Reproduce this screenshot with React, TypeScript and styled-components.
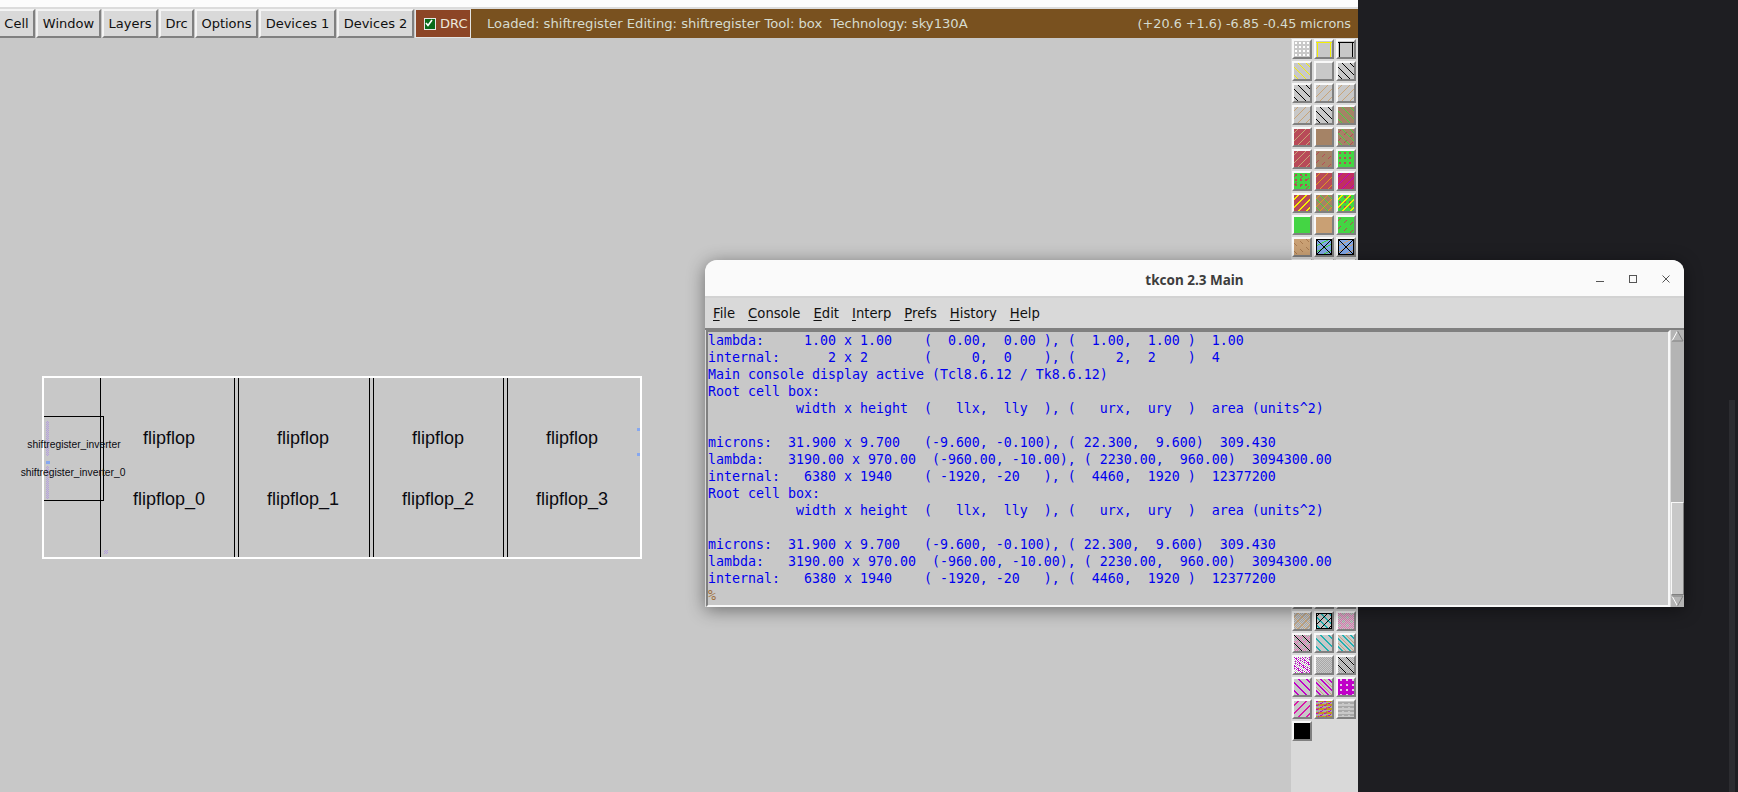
import React from 'react';
import styled, { createGlobalStyle } from 'styled-components';

const GlobalStyle = createGlobalStyle`
  html, body {
    margin: 0;
    padding: 0;
    overflow: hidden;
    background: #1e1e22;
  }
`;

const Screen = styled.div`
  display: flex;
  width: 1738px;
  height: 792px;
  overflow: hidden;
  position: relative;
`;
const Editor = styled.div`
  display: flex;
  flex-direction: column;
  width: 1358px;
  height: 100%;
  border-top: 7px solid #fcfcfc;
  box-sizing: border-box;
  background: #c8c8c8;
`;
const TopEdge = styled.div`
  height: 2px;
  background: #dcdcdc;
`;
const Toolbar = styled.div`
  display: flex;
  height: 29px;
  font-family: 'DejaVu Sans', sans-serif;
  font-size: 13px;
`;
const ToolButton = styled.div<{ $w: number; $first?: boolean }>`
  box-sizing: border-box;
  width: ${(p) => p.$w}px;
  margin-right: 1px;
  display: flex;
  align-items: center;
  justify-content: center;
  background: #d9d9d9;
  color: #101010;
  border: 2px solid;
  border-color: #f4f4f4 #808080 #808080 #f4f4f4;
  ${(p) => p.$first && 'border-left: 0;'}
`;
const DrcButton = styled.div`
  box-sizing: border-box;
  width: 56px;
  display: flex;
  align-items: center;
  gap: 4px;
  padding-left: 8px;
  background: #8c4526;
  color: #ece8dc;
  border: 1px solid #e4e4e4;
`;
const CheckBox = styled.span`
  display: flex;
  width: 10px;
  height: 10px;
  background: #0a6a1a;
  border: 1px solid #e8e8e8;
`;
const StatusBar = styled.div`
  flex: 1;
  display: flex;
  align-items: center;
  justify-content: space-between;
  padding: 0 7px 0 16px;
  background: #79511f;
  color: #d6dcd0;
  white-space: pre;
`;
const StatusLeft = styled.span`
  font-size: 13.15px;
`;
const StatusRight = styled.span`
  font-size: 12.8px;
`;
const Workspace = styled.div`
  flex: 1;
  display: flex;
  min-height: 0;
`;
const Canvas = styled.div`
  flex: 1;
  position: relative;
  background: #c8c8c8;
`;
const CellBox = styled.div`
  position: absolute;
  left: 42px;
  top: 338px;
  width: 600px;
  height: 183px;
  box-sizing: border-box;
  border: 2px solid #ffffff;
`;
const Rail = styled.div<{ $x: number }>`
  position: absolute;
  left: ${(p) => p.$x}px;
  top: 0;
  bottom: 0;
  width: 1px;
  background: #000000;
`;
const InverterBox = styled.div`
  position: absolute;
  left: 0;
  top: 38px;
  width: 60px;
  height: 85px;
  box-sizing: border-box;
  border: 1px solid #000000;
  border-left: 0;
`;
const Label = styled.div<{ $x: number; $y: number; $small?: boolean }>`
  position: absolute;
  left: ${(p) => p.$x}px;
  top: ${(p) => p.$y}px;
  transform: translate(-50%, -50%);
  font-family: 'Liberation Sans', Arial, sans-serif;
  font-size: ${(p) => (p.$small ? '10.3px' : '18px')};
  color: #0a0a10;
  white-space: nowrap;
`;
const Mark = styled.div<{ $x: number; $y: number; $w: number; $h: number; $dotted?: boolean }>`
  position: absolute;
  left: ${(p) => p.$x}px;
  top: ${(p) => p.$y}px;
  width: ${(p) => p.$w}px;
  height: ${(p) => p.$h}px;
  background: ${(p) =>
    p.$dotted
      ? 'repeating-conic-gradient(#b49ee0 0 25%, #c8c8c8 0 50%) 0 0 / 2px 2px'
      : '#86a8f0'};
`;
const Palette = styled.div`
  width: 67px;
  box-sizing: border-box;
  padding: 1px 0 0 1px;
  background: #d9d9d9;
  display: grid;
  grid-template-columns: repeat(3, 20px);
  grid-auto-rows: 20px;
  gap: 2px;
  overflow: hidden;
  align-content: start;
`;
const SwatchFrame = styled.div`
  box-sizing: border-box;
  width: 20px;
  height: 20px;
  border: 2px solid;
  border-color: #f8f8f8 #808080 #808080 #f8f8f8;
  svg {
    display: block;
  }
`;
const Desktop = styled.div`
  flex: 1;
  display: flex;
  justify-content: flex-end;
  padding-right: 3px;
  background: #1e1e22;
`;
const DesktopScroll = styled.div`
  width: 6px;
  margin-top: 400px;
  background: #2c2c30;
`;

const Terminal = styled.div`
  position: absolute;
  left: 705px;
  top: 260px;
  width: 979px;
  height: 347px;
  display: flex;
  flex-direction: column;
  border-radius: 12px 12px 0 0;
  overflow: hidden;
  background: #d9d9d9;
  box-shadow: 0 3px 18px rgba(0, 0, 0, 0.45);
`;
const TitleBar = styled.div`
  height: 36px;
  flex: none;
  display: grid;
  grid-template-columns: 1fr auto 1fr;
  align-items: center;
  background: #fafafa;
  border-bottom: 2px solid #d2d2d2;
`;
const Title = styled.div`
  grid-column: 2;
  padding-top: 3px;
  font-family: 'Noto Sans', sans-serif;
  font-weight: 700;
  font-size: 13.5px;
  color: #3d3d3d;
`;
const WindowControls = styled.div`
  grid-column: 3;
  justify-self: end;
  display: flex;
  align-items: center;
  gap: 23px;
  padding: 2px 13px 0 0;
  svg {
    display: block;
  }
`;
const MenuBar = styled.div`
  height: 32px;
  flex: none;
  display: flex;
  align-items: center;
  gap: 13px;
  padding-left: 8px;
  background: #d9d9d9;
  font-family: 'DejaVu Sans', sans-serif;
  font-size: 13.2px;
  color: #101010;
  border-bottom: 2px solid #808080;
  box-sizing: border-box;
`;
const MenuKey = styled.span`
  text-decoration: underline;
  text-underline-offset: 2px;
`;
const ConsoleRow = styled.div`
  flex: 1;
  min-height: 0;
  display: flex;
  padding-left: 1px;
`;
const ConsoleText = styled.pre`
  flex: 1;
  margin: 0;
  box-sizing: border-box;
  padding: 0;
  background: #c8c8c8;
  border: 2px solid;
  border-color: #808080 #f8f8f8 #f8f8f8 #808080;
  color: #0000ee;
  font-family: 'DejaVu Sans Mono', monospace;
  font-size: 13.29px;
  line-height: 17px;
  overflow: hidden;
`;
const Prompt = styled.span`
  color: #a0703c;
`;
const ScrollBar = styled.div`
  width: 14px;
  flex: none;
  display: flex;
  flex-direction: column;
  background: #b4b4b4;
  border-left: 1px solid #d9d9d9;
  box-sizing: border-box;
  svg {
    display: block;
  }
`;
const Trough = styled.div`
  flex: 1;
  display: flex;
  flex-direction: column;
  justify-content: flex-end;
`;
const Thumb = styled.div`
  height: 93px;
  box-sizing: border-box;
  background: #c8c8c8;
  border: 1px solid;
  border-color: #f8f8f8 #808080 #808080 #f8f8f8;
`;

const GRAY = '#c8c8c8';
const RED = '#b84a58';
const BROWN = '#a58366';
const GREEN = '#44d544';
const TAN = '#c9a074';
const BLUE = '#82a8e8';
const ROSE = '#c03060';
const TEAL = '#20b0b0';
const PINK = '#e070b0';
const MAGENTA = '#c000c8';
const GOLD = '#c09a20';
const DIM = '#a8a8a8';
const ORANGE = '#e09a20';
const YELLOW = '#f4f000';
const SAND = '#c8a478';

type Test = (x: number, y: number) => boolean;

const kinds: Record<string, Test> = {
  up: (x, y) => (x + y) % 8 === 3,
  down: (x, y) => (x - y + 16) % 8 === 4,
  upAlt: (x, y) => (x + y) % 8 === 7,
  downAlt: (x, y) => (x - y + 16) % 8 === 0,
  upThick: (x, y) => (x + y) % 8 === 3 || (x + y) % 8 === 4,
  downThick: (x, y) => (x - y + 16) % 8 === 4 || (x - y + 16) % 8 === 5,
  upDash: (x, y) => (x + y) % 8 === 3 && x % 6 < 3,
  downDash: (x, y) => (x - y + 16) % 8 === 4 && x % 6 < 3,
  dots: (x, y) => x % 4 > 0 && x % 4 < 3 && y % 4 > 0 && y % 4 < 3,
  blocks: (x, y) => x % 5 > 0 && x % 5 < 3 && y % 5 > 0 && y % 5 < 3,
  specks: (x, y) => (x + 2 * y) % 8 < 1 || ((x + 2 * y) % 8 === 1 && y % 2 === 0),
  check: (x, y) => (x + y) % 2 === 0,
  box: (x, y) => y >= 1 && (x === 1 || y === 1 || x === 14),
  frame: (x, y) => x === 0 || y === 0 || x === 15 || y === 15,
  cross: (x, y) => x === y || x + y === 15,
  band: (x, y) => (x + 2 * y) % 12 < 2,
  brick: (x, y) => y % 4 === 1 || (y % 4 === 2 && x % 6 < 4),
  pink: (x, y) => (x + y) % 2 === 0 && ((x + y) % 8 < 3 || (x - y + 16) % 8 < 3),
  bits: (x, y) => (x * 3 + y * 5) % 11 < 2 || (x - y + 16) % 8 === 0,
  holes: (x, y) => !((x % 6 === 2 || x % 6 === 3) && y % 5 < 2),
};

type Layer = [string, string];

// one palette tile: a background and a stack of 16x16 bitmap layers
const Swatch = ({ bg, layers = [] }: { bg: string; layers?: Layer[] }) => (
  <SwatchFrame>
    <svg width="16" height="16" viewBox="0 0 16 16" shapeRendering="crispEdges">
      <rect width="16" height="16" fill={bg} />
      {layers.map(([kind, color], i) => {
        let d = '';
        for (let y = 0; y < 16; y++) {
          for (let x = 0; x < 16; x++) {
            if (kinds[kind](x, y)) d += `M${x} ${y}h1v1h-1z`;
          }
        }
        return <path key={i} d={d} fill={color} />;
      })}
    </svg>
  </SwatchFrame>
);

const plain = { bg: GRAY };

const topTiles: { bg: string; layers?: Layer[] }[] = [
  { bg: GRAY, layers: [['dots', '#ffffff']] },
  { bg: GRAY, layers: [['box', YELLOW]] },
  { bg: GRAY, layers: [['box', '#000000']] },

  { bg: GRAY, layers: [['down', YELLOW]] },
  plain,
  { bg: GRAY, layers: [['down', '#000000']] },

  { bg: GRAY, layers: [['down', '#000000']] },
  { bg: GRAY, layers: [['up', SAND]] },
  { bg: GRAY, layers: [['up', SAND]] },

  { bg: GRAY, layers: [['up', SAND]] },
  { bg: GRAY, layers: [['down', '#000000']] },
  { bg: BROWN, layers: [['down', GREEN]] },

  { bg: RED, layers: [['up', SAND]] },
  { bg: BROWN },
  { bg: BROWN, layers: [['down', GREEN], ['upDash', RED]] },

  { bg: RED, layers: [['up', SAND]] },
  { bg: BROWN, layers: [['upDash', RED]] },
  { bg: GREEN, layers: [['blocks', RED]] },

  { bg: GREEN, layers: [['blocks', RED], ['upDash', RED]] },
  { bg: RED, layers: [['up', ORANGE]] },
  { bg: ROSE, layers: [['up', MAGENTA]] },

  { bg: RED, layers: [['upThick', YELLOW]] },
  { bg: BROWN, layers: [['down', GREEN], ['up', ORANGE]] },
  { bg: GREEN, layers: [['blocks', RED], ['upThick', YELLOW]] },

  { bg: GREEN },
  { bg: TAN },
  { bg: GREEN, layers: [['upDash', RED]] },

  { bg: TAN, layers: [['downDash', '#a87a50']] },
  { bg: BLUE, layers: [['band', GREEN], ['cross', '#000000'], ['frame', '#000000']] },
  { bg: BLUE, layers: [['band', TAN], ['cross', '#000000'], ['frame', '#000000']] },
];

const bottomTiles: { bg: string; layers?: Layer[] }[] = [
  { bg: GRAY, layers: [['check', DIM], ['down', SAND], ['up', SAND]] },
  { bg: GRAY, layers: [['downThick', TEAL], ['up', '#000000'], ['frame', '#000000']] },
  { bg: GRAY, layers: [['check', DIM], ['pink', PINK]] },

  { bg: GRAY, layers: [['check', DIM], ['pink', PINK], ['downAlt', '#000000']] },
  { bg: GRAY, layers: [['downThick', TEAL]] },
  { bg: GRAY, layers: [['downThick', TEAL], ['downAlt', SAND]] },

  { bg: '#ffffff', layers: [['check', '#c0c0c0'], ['bits', MAGENTA]] },
  { bg: GRAY, layers: [['check', DIM]] },
  { bg: GRAY, layers: [['check', DIM], ['downAlt', '#000000']] },

  { bg: GRAY, layers: [['downThick', MAGENTA]] },
  { bg: GRAY, layers: [['downThick', MAGENTA], ['downAlt', SAND]] },
  { bg: '#e4c8e4', layers: [['holes', MAGENTA]] },

  { bg: GRAY, layers: [['upThick', '#d818a8']] },
  { bg: GOLD, layers: [['brick', DIM], ['specks', MAGENTA]] },
  { bg: GRAY, layers: [['brick', DIM]] },

  { bg: '#000000' },
];

const hiddenTiles = Array.from({ length: 48 }, () => plain);

const menuItems = [
  ['F', 'ile'],
  ['C', 'onsole'],
  ['E', 'dit'],
  ['I', 'nterp'],
  ['P', 'refs'],
  ['H', 'istory'],
  ['H', 'elp'],
];

const cells = [
  { x: 125, name: 'flipflop_0' },
  { x: 259, name: 'flipflop_1' },
  { x: 394, name: 'flipflop_2' },
  { x: 528, name: 'flipflop_3' },
];

const consoleLog = `lambda:     1.00 x 1.00    (  0.00,  0.00 ), (  1.00,  1.00 )  1.00
internal:      2 x 2       (     0,  0    ), (     2,  2    )  4
Main console display active (Tcl8.6.12 / Tk8.6.12)
Root cell box:
           width x height  (   llx,  lly  ), (   urx,  ury  )  area (units^2)

microns:  31.900 x 9.700   (-9.600, -0.100), ( 22.300,  9.600)  309.430
lambda:   3190.00 x 970.00  (-960.00, -10.00), ( 2230.00,  960.00)  3094300.00
internal:   6380 x 1940    ( -1920, -20   ), (  4460,  1920 )  12377200
Root cell box:
           width x height  (   llx,  lly  ), (   urx,  ury  )  area (units^2)

microns:  31.900 x 9.700   (-9.600, -0.100), ( 22.300,  9.600)  309.430
lambda:   3190.00 x 970.00  (-960.00, -10.00), ( 2230.00,  960.00)  3094300.00
internal:   6380 x 1940    ( -1920, -20   ), (  4460,  1920 )  12377200
`;

const App = () => (
  <Screen>
    <GlobalStyle />
    <Editor>
      <TopEdge />
      <Toolbar>
        <ToolButton $w={35} $first>Cell</ToolButton>
        <ToolButton $w={65}>Window</ToolButton>
        <ToolButton $w={56}>Layers</ToolButton>
        <ToolButton $w={35}>Drc</ToolButton>
        <ToolButton $w={63}>Options</ToolButton>
        <ToolButton $w={77}>Devices 1</ToolButton>
        <ToolButton $w={77}>Devices 2</ToolButton>
        <DrcButton>
          <CheckBox>
            <svg width="8" height="8" viewBox="0 0 8 8">
              <path d="M1 4l2 2.5L7 1" fill="none" stroke="#ffffff" strokeWidth="1.6" />
            </svg>
          </CheckBox>
          DRC
        </DrcButton>
        <StatusBar>
          <StatusLeft>Loaded: shiftregister Editing: shiftregister Tool: box  Technology: sky130A</StatusLeft>
          <StatusRight>(+20.6 +1.6) -6.85 -0.45 microns</StatusRight>
        </StatusBar>
      </Toolbar>
      <Workspace>
        <Canvas>
          <CellBox>
            <Rail $x={56} />
            <Rail $x={190} />
            <Rail $x={194} />
            <Rail $x={325} />
            <Rail $x={329} />
            <Rail $x={459} />
            <Rail $x={463} />
            <InverterBox />
            <Mark $x={2} $y={43} $w={3} $h={35} $dotted />
            <Mark $x={2} $y={83} $w={4} $h={3} />
            <Mark $x={2} $y={88} $w={3} $h={33} $dotted />
            <Mark $x={60} $y={172} $w={4} $h={4} $dotted />
            <Mark $x={593} $y={50} $w={3} $h={3} />
            <Mark $x={593} $y={75} $w={3} $h={3} />
            <Label $x={30} $y={66} $small>shiftregister_inverter</Label>
            <Label $x={29} $y={94} $small>shiftregister_inverter_0</Label>
            {cells.map((cell) => (
              <React.Fragment key={cell.name}>
                <Label $x={cell.x} $y={60}>flipflop</Label>
                <Label $x={cell.x} $y={121}>{cell.name}</Label>
              </React.Fragment>
            ))}
          </CellBox>
        </Canvas>
        <Palette>
          {[...topTiles, ...hiddenTiles, ...bottomTiles].map((tile, i) => (
            <Swatch key={i} bg={tile.bg} layers={tile.layers} />
          ))}
        </Palette>
      </Workspace>
    </Editor>
    <Desktop>
      <DesktopScroll />
    </Desktop>
    <Terminal>
      <TitleBar>
        <Title>tkcon 2.3 Main</Title>
        <WindowControls>
          <svg width="10" height="10" viewBox="0 0 10 10">
            <path d="M1 7.5h8" stroke="#555555" strokeWidth="1" />
          </svg>
          <svg width="10" height="10" viewBox="0 0 10 10">
            <rect x="1.5" y="1.5" width="7" height="7" fill="none" stroke="#555555" strokeWidth="1" />
          </svg>
          <svg width="10" height="10" viewBox="0 0 10 10">
            <path d="M1.5 1.5l7 7M8.5 1.5l-7 7" stroke="#555555" strokeWidth="1" />
          </svg>
        </WindowControls>
      </TitleBar>
      <MenuBar>
        {menuItems.map(([key, rest]) => (
          <span key={key + rest}>
            <MenuKey>{key}</MenuKey>
            {rest}
          </span>
        ))}
      </MenuBar>
      <ConsoleRow>
        <ConsoleText>
          {consoleLog}
          <Prompt>%</Prompt>
        </ConsoleText>
        <ScrollBar>
          <svg width="13" height="12" viewBox="0 0 13 12">
            <path d="M6.5 1L1 11" stroke="#ffffff" strokeWidth="1" fill="none" />
            <path d="M6.5 1L12 11H1" stroke="#808080" strokeWidth="1" fill="none" />
          </svg>
          <Trough>
            <Thumb />
          </Trough>
          <svg width="13" height="12" viewBox="0 0 13 12">
            <path d="M1 1L6.5 11" stroke="#ffffff" strokeWidth="1" fill="none" />
            <path d="M1 1H12L6.5 11" stroke="#808080" strokeWidth="1" fill="none" />
          </svg>
        </ScrollBar>
      </ConsoleRow>
    </Terminal>
  </Screen>
);

export default App;
